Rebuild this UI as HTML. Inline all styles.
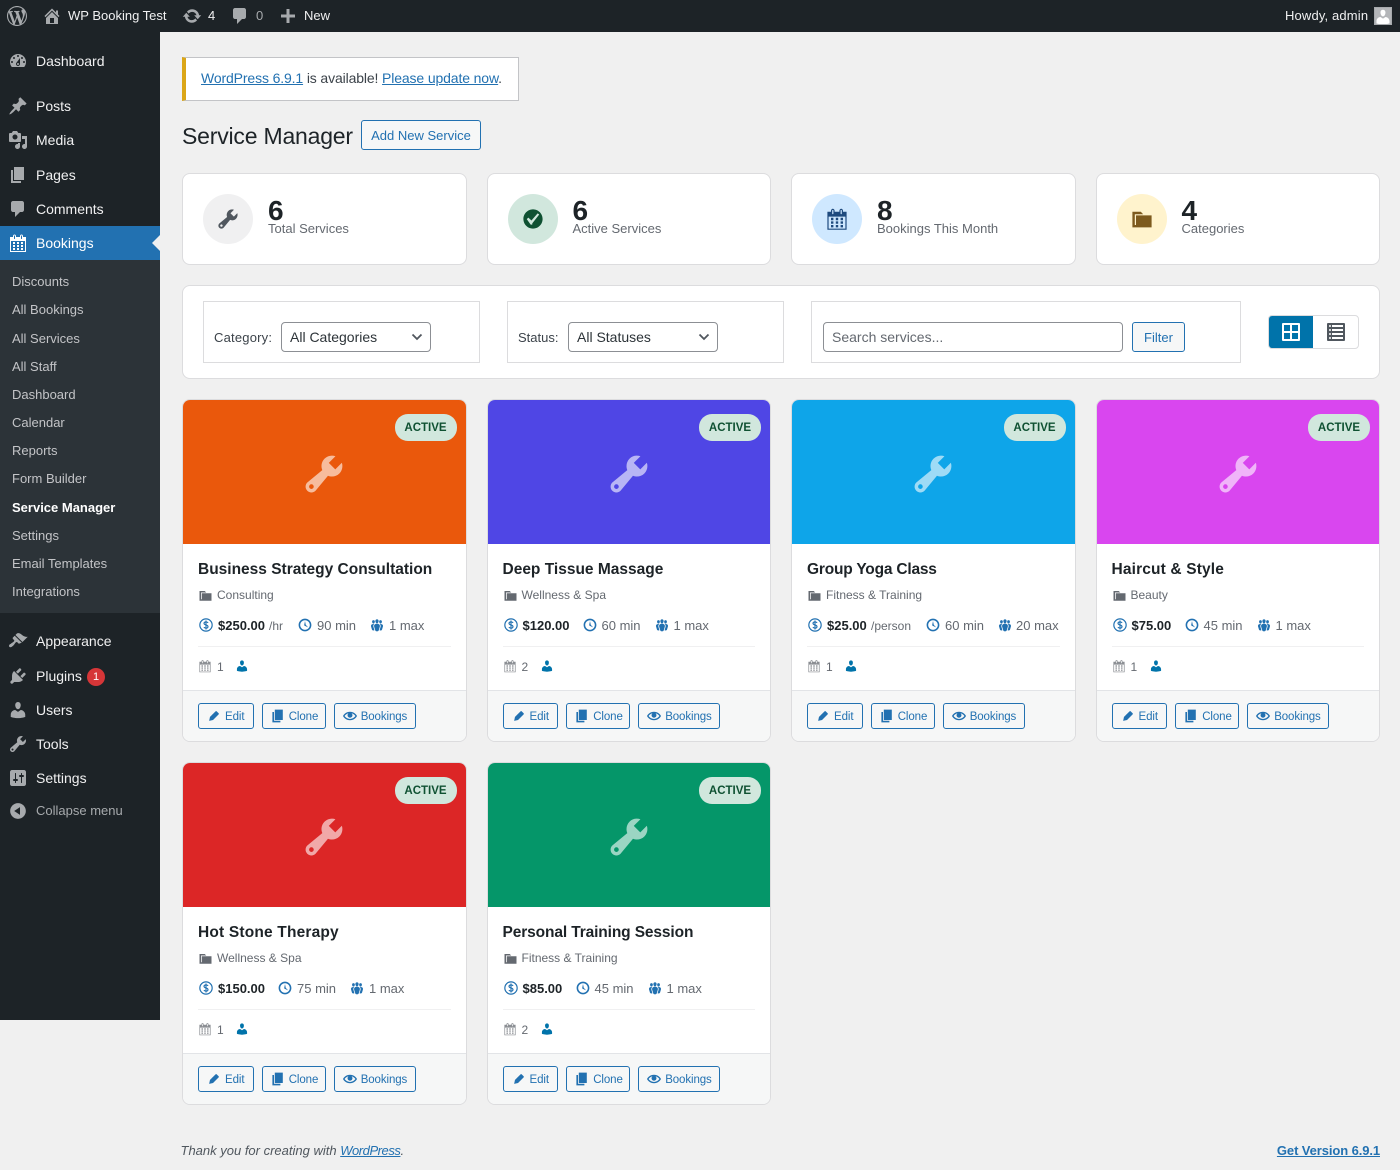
<!DOCTYPE html>
<html lang="en"><head><meta charset="utf-8"><title>Service Manager</title>
<style>
*{box-sizing:border-box}
html,body{margin:0;padding:0}
body{width:1400px;height:1170px;position:relative;overflow:hidden;background:#f0f0f0;font-family:"Liberation Sans",sans-serif;color:#1d2327;font-size:13px}
a{color:#2271b1}
.a{position:absolute}
.t{position:absolute;white-space:nowrap;line-height:20px;height:20px}
svg.i{position:absolute;fill:currentColor;display:block}
#bar{left:0;top:0;width:1400px;height:32px;background:#1d2327;color:#f0f0f1;font-size:13px}
#bar svg.i{color:#a7aaad}
#side{left:0;top:32px;width:160px;height:988px;background:#1d2327}
.m{left:36px;color:#f0f0f1;font-size:14px}
.s{left:12px;color:#c3c4c7;font-size:13px}
.ic{left:8px;width:20px;height:20px;color:#a7aaad}
.box{position:absolute;background:#fff;border:1px solid #dcdcde;border-radius:8px}
.st{width:284.5px;height:92px;top:173px}
.circ{position:absolute;left:20px;top:20px;width:50px;height:50px;border-radius:50%}
.circ svg{left:13px;top:13px;width:24px;height:24px}
.num{position:absolute;left:85px;top:21px;font-size:28px;font-weight:700;line-height:32px;color:#1d2327}
.lb{position:absolute;left:85px;top:44.5px;font-size:13px;line-height:20px;color:#646970;white-space:nowrap}
.fs{position:absolute;top:301px;height:62px;border:1px solid #dcdcde;background:#fff}
.sel{position:absolute;top:322px;height:30px;border:1px solid #8c8f94;border-radius:4px;background:#fff;font-size:14px;line-height:28px;padding-left:8px;color:#2c3338}
.sel svg{position:absolute;right:7px;top:9px;width:12px;height:10px;fill:none;stroke:#50575e;stroke-width:1.8}
.c{position:absolute;width:284.5px;height:343px;background:#fff;border:1px solid #dcdcde;border-radius:8px;overflow:hidden}
.im{position:absolute;left:0;top:0;right:0;height:144px}
.wr{position:absolute;left:50%;top:50.5px;margin-left:-23px;width:46px;height:46px;fill:#fff;fill-opacity:.6}
.bd{position:absolute;right:9px;top:14px;width:62px;height:27px;border-radius:13px;background:#d1e7dd;color:#0f5132;font-size:11.5px;font-weight:700;line-height:28.5px;text-align:center}
.ti{left:15px;top:160px;font-size:15.5px;font-weight:700;color:#1d2327}
.fo{left:15px;top:188px;width:15px;height:15px;color:#646970}
.ca{left:34px;top:185px;font-size:12px;color:#646970}
.p{top:216px;font-size:13px;font-weight:700;color:#1d2327}
.g{top:216px;font-size:13px;color:#646970}
.u{top:216px;font-size:12px;color:#646970}
.b{top:217px;width:16px;height:16px;color:#2271b1}
.dv{position:absolute;left:15px;right:15px;top:246px;height:1px;background:#f0f0f1}
.cal{left:15px;top:259px;width:14px;height:14px;color:#8c8f94}
.n{left:34px;top:257px;font-size:12px;color:#646970}
.per{left:52px;top:259px;width:14px;height:14px;color:#0073aa}
.ft{position:absolute;left:0;right:0;top:290px;height:52px;background:#f6f7f7;border-top:1px solid #e2e4e7}
.bt{position:absolute;top:303px;height:26px;background:#f6f7f7;border:1px solid #2271b1;border-radius:3px;color:#2271b1;font-size:11.5px;letter-spacing:-.1px;line-height:24px}
.bt svg{position:absolute;top:5px;width:14px;height:14px;fill:currentColor}
.bt span{position:absolute;top:1px;white-space:nowrap}
.e{left:15px;width:55.7px}.e svg{left:8px}.e span{left:26px}
.l{left:78.7px;width:64px}.l svg{left:7px;top:4px !important;width:16px !important;height:16px !important}.l span{left:26px}
.o{left:150.7px;width:82px}.o svg{left:8px}.o span{left:26px}
</style></head><body>
<svg width="0" height="0" style="position:absolute"><defs>
<symbol id="wp" viewBox="0 0 20 20"><path d="M20 10c0-5.51-4.49-10-10-10C4.48 0 0 4.49 0 10c0 5.52 4.48 10 10 10 5.51 0 10-4.48 10-10zM7.78 15.37L4.37 6.22c.55-.02 1.17-.08 1.17-.08.5-.06.44-1.13-.06-1.11 0 0-1.45.11-2.37.11-.18 0-.37 0-.58-.01C4.12 2.69 6.87 1.11 10 1.11c2.33 0 4.45.87 6.05 2.34-.68-.11-1.65.39-1.65 1.58 0 .74.45 1.36.9 2.1.35.61.55 1.36.55 2.46 0 1.49-1.4 5-1.4 5l-3.03-8.37c.54-.02.82-.17.82-.17.5-.05.44-1.25-.06-1.22 0 0-1.44.12-2.38.12-.87 0-2.33-.12-2.33-.12-.5-.03-.56 1.2-.06 1.22l.92.08 1.26 3.41zM17.41 10c.24-.64.74-1.87.43-4.25.7 1.29 1.05 2.71 1.05 4.25 0 3.29-1.73 6.24-4.4 7.78.97-2.59 1.94-5.2 2.92-7.78zM6.1 18.09C3.12 16.65 1.11 13.53 1.11 10c0-1.3.23-2.48.72-3.59C3.25 10.3 4.67 14.2 6.1 18.09zm4.03-6.63l2.58 6.98c-.86.29-1.76.45-2.71.45-.79 0-1.57-.11-2.29-.33.81-2.38 1.62-4.74 2.42-7.1z"/></symbol>
<symbol id="home" viewBox="0 0 20 20"><path d="M16 8.5l1.53 1.53-1.06 1.06L10 4.62l-6.47 6.47-1.06-1.06L10 2.5l4 4v-2h2v4zm-6-2.46l6 5.99V18H4v-5.97zM12 17v-5H8v5h4z"/></symbol>
<symbol id="upd" viewBox="0 0 20 20"><path d="M10.2 3.28c3.53 0 6.43 2.61 6.92 6h2.08l-3.5 4-3.5-4h2.32c-.45-1.97-2.21-3.45-4.32-3.45-1.45 0-2.73.71-3.54 1.78L4.95 5.66C6.23 4.2 8.11 3.28 10.2 3.28zm-.4 13.44c-3.52 0-6.43-2.61-6.92-6H.8l3.5-4c1.17 1.33 2.33 2.67 3.5 4H5.48c.45 1.97 2.21 3.45 4.32 3.45 1.45 0 2.73-.71 3.54-1.78l1.71 1.95c-1.28 1.46-3.15 2.38-5.25 2.38z"/></symbol>
<symbol id="com" viewBox="0 0 20 20"><path d="M5 2h9c1.1 0 2 .9 2 2v7c0 1.1-.9 2-2 2h-2l-5 5v-5H5c-1.1 0-2-.9-2-2V4c0-1.1.9-2 2-2z"/></symbol>
<symbol id="plus" viewBox="0 0 20 20"><path d="M17 8.5v3h-5.5V17h-3v-5.500H3v-3h5.500V3h3v5.500z"/></symbol>
<symbol id="dash" viewBox="0 0 20 20"><path d="M3.76 16h12.48c1.1-1.37 1.76-3.11 1.76-5 0-4.42-3.58-8-8-8s-8 3.58-8 8c0 1.89.66 3.63 1.76 5zM10 4c.55 0 1 .45 1 1s-.45 1-1 1-1-.45-1-1 .45-1 1-1zM6 6c.55 0 1 .45 1 1s-.45 1-1 1-1-.45-1-1 .45-1 1-1zm8 0c.55 0 1 .45 1 1s-.45 1-1 1-1-.45-1-1 .45-1 1-1zm-5.370 5.550L12 7v6c0 1.100-.9 2-2 2s-2-.9-2-2c0-.57.24-1.080.63-1.450zM4 10c.55 0 1 .45 1 1s-.45 1-1 1-1-.45-1-1 .45-1 1-1zm12 0c.55 0 1 .45 1 1s-.45 1-1 1-1-.45-1-1 .45-1 1-1zm-5 3c0-.55-.45-1-1-1s-1 .45-1 1 .45 1 1 1 1-.45 1-1z"/></symbol>
<symbol id="pin" viewBox="0 0 20 20"><path d="M10.44 3.020l1.820-1.820 6.360 6.350-1.830 1.820c-1.050-.68-2.480-.57-3.410.36l-.75.75c-.92.93-1.040 2.350-.35 3.410l-1.830 1.820-2.410-2.410-2.800 2.790c-.42.42-3.380 2.710-3.800 2.290s1.860-3.390 2.280-3.810l2.790-2.790L4.100 9.360l1.830-1.820c1.050.69 2.480.57 3.400-.36l.75-.75c.93-.92 1.050-2.350.36-3.410z"/></symbol>
<symbol id="med" viewBox="0 0 20 20"><path d="M13 11V4c0-.55-.45-1-1-1h-1.670L9 1H5L3.670 3H2c-.55 0-1 .45-1 1v7c0 .55.45 1 1 1h10c.55 0 1-.45 1-1zM7 4.500c1.380 0 2.500 1.120 2.500 2.500S8.380 9.500 7 9.500 4.500 8.380 4.500 7 5.620 4.500 7 4.500zM14 6h5v10.500c0 1.380-1.120 2.500-2.500 2.500S14 17.880 14 16.500s1.120-2.500 2.500-2.500c.17 0 .34.02.5.05V9h-3V6zm-4 8.050V13h2v3.500c0 1.380-1.120 2.500-2.500 2.500S7 17.880 7 16.500 8.120 14 9.500 14c.17 0 .34.02.5.05z"/></symbol>
<symbol id="pg" viewBox="0 0 20 20"><path d="M6 15V2h10v13H6zm-1 1h8v2H3V5h2v11z"/></symbol>
<symbol id="cald" viewBox="0 0 20 20"><path d="M15 4h3v15H2V4h3V3c0-.41.15-.76.44-1.060.29-.29.65-.44 1.060-.44s.77.15 1.060.44c.29.3.44.65.44 1.060v1h4V3c0-.41.15-.76.44-1.060.29-.29.65-.44 1.060-.44s.77.15 1.060.44c.29.3.44.65.44 1.060v1zM6 3v2.500c0 .14.05.26.15.36.09.09.21.14.35.14s.26-.05.35-.14c.1-.1.15-.22.15-.36V3c0-.14-.05-.26-.15-.35-.09-.1-.21-.15-.35-.15s-.26.05-.35.15c-.1.09-.15.21-.15.35zm7 0v2.500c0 .14.05.26.14.36.1.09.22.14.36.14s.26-.05.36-.14c.09-.1.14-.22.14-.36V3c0-.14-.05-.26-.14-.35-.1-.1-.22-.15-.36-.15s-.26.05-.36.15c-.09.09-.14.21-.14.35zm4 15V8H3v10h14zM7 9v2H5V9h2zm2 0h2v2H9V9zm4 2V9h2v2h-2zm-6 1v2H5v-2h2zm2 0h2v2H9v-2zm4 2v-2h2v2h-2zm-6 1v2H5v-2h2zm4 2H9v-2h2v2zm4 0h-2v-2h2v2z"/></symbol>
<symbol id="app" viewBox="0 0 20 20"><path d="M14.480 11.060L7.410 3.990l1.500-1.500c.5-.56 2.300-.47 3.510.32 1.210.8 1.430 1.280 2.910 2.100 1.180.64 2.450 1.260 4.450.85zm-.71.71L6.700 4.700 4.930 6.470c-.39.39-.39 1.020 0 1.410l1.060 1.060c.39.39.39 1.030 0 1.420-.6.6-1.430 1.110-2.210 1.690-.35.26-.7.53-1.010.84C1.430 13.230.4 14.840 1.400 15.840c.98.98 2.620-.07 3.970-1.360.3-.31.57-.66.84-1.010.57-.78 1.080-1.610 1.690-2.210.38-.39 1.020-.39 1.410 0l1.060 1.060c.39.39 1.020.39 1.410 0z"/></symbol>
<symbol id="plg" viewBox="0 0 20 20"><path d="M13.110 4.360L9.870 7.600 8 5.730l3.240-3.240c.35-.34 1.050-.2 1.560.32.52.51.66 1.210.31 1.550zm-8 1.770l.91-1.120 9.010 9.010-1.190.84c-.71.71-2.630 1.160-3.820 1.160H6.140L4.900 17.260c-.59.59-1.540.59-2.120 0-.59-.58-.59-1.530 0-2.120l1.240-1.240v-3.880c0-1.130.4-3.190 1.090-3.890zm7.260 3.970l3.240-3.240c.34-.35 1.040-.21 1.550.31.52.51.66 1.210.31 1.550l-3.240 3.250z"/></symbol>
<symbol id="usr" viewBox="0 0 20 20"><path d="M10 9.250c-2.270 0-2.730-3.440-2.730-3.440C7 4.020 7.820 2 9.970 2c2.160 0 2.980 2.020 2.710 3.810 0 0-.41 3.440-2.680 3.440zm0 2.570L12.720 10c2.390 0 4.520 2.330 4.520 4.530v2.490s-3.650 1.130-7.240 1.130c-3.650 0-7.240-1.130-7.240-1.130v-2.490c0-2.250 1.940-4.480 4.470-4.480z"/></symbol>
<symbol id="w" viewBox="0 0 20 20"><path fill-rule="evenodd" d="M16.680 9.770c-1.340 1.340-3.300 1.670-4.950.99l-5.410 6.520c-.99.99-2.590.99-3.580 0s-.99-2.590 0-3.570l6.520-5.420c-.68-1.650-.35-3.610.99-4.950 1.280-1.280 3.120-1.620 4.720-1.060l-2.890 2.890 2.820 2.820 2.860-2.870c.53 1.580.18 3.390-1.080 4.670zM3.810 16.210c.4.39 1.040.39 1.430 0 .4-.4.4-1.040 0-1.430-.39-.4-1.030-.4-1.430 0-.39.39-.39 1.030 0 1.430z"/></symbol>
<symbol id="set" viewBox="0 0 20 20"><path d="M18 16V4c0-1.100-.9-2-2-2H4c-1.100 0-2 .9-2 2v12c0 1.100.9 2 2 2h12c1.100 0 2-.9 2-2zM8 11h1c.55 0 1 .45 1 1s-.45 1-1 1H8v1.500c0 .28-.22.5-.5.5s-.5-.22-.5-.5V13H6c-.55 0-1-.45-1-1s.45-1 1-1h1V5.500c0-.28.22-.5.5-.5s.5.22.5.5V11zm5-2h-1c-.55 0-1-.45-1-1s.45-1 1-1h1V5.500c0-.28.22-.5.5-.5s.5.22.5.5V7h1c.55 0 1 .45 1 1s-.45 1-1 1h-1v5.500c0 .28-.22.5-.5.5s-.5-.22-.5-.5V9z"/></symbol>
<symbol id="col" viewBox="0 0 20 20"><path d="M10 2.160c4.330 0 7.840 3.510 7.840 7.840s-3.510 7.840-7.840 7.840S2.160 14.330 2.160 10 5.710 2.160 10 2.160zm2 11.720V6.120L6.180 9.970z"/></symbol>
<symbol id="yes" viewBox="0 0 20 20"><path d="M10 2c-4.420 0-8 3.580-8 8s3.580 8 8 8 8-3.580 8-8-3.580-8-8-8zm-.615 12.660h-1.340l-3.240-4.540 1.340-1.250 2.570 2.400 5.140-5.930 1.340.94-5.810 7.380z"/></symbol>
<symbol id="fol" viewBox="0 0 20 20"><path d="M5 7h13v10H2V4h7l2 2H4v9h1V7z"/></symbol>
<symbol id="clk" viewBox="0 0 20 20"><path d="M10 2c4.420 0 8 3.580 8 8s-3.580 8-8 8-8-3.580-8-8 3.580-8 8-8zm0 14c3.310 0 6-2.690 6-6s-2.690-6-6-6-6 2.690-6 6 2.690 6 6 6zm-.71-5.290c.07.05.14.1.23.15l-.02.02L14 13l-3.030-3.190L10 5l-.97 4.810h.01c0 .02-.01.05-.02.09S9 9.970 9 10c0 .28.1.52.29.71z"/></symbol>
<symbol id="grp" viewBox="0 0 20 20"><path d="M8.030 4.460c-.29 1.280.55 3.460 1.970 3.460 1.410 0 2.250-2.180 1.960-3.460-.22-.98-1.080-1.630-1.960-1.630-.89 0-1.740.65-1.970 1.630zm-4.130.9c-.25 1.080.47 2.930 1.670 2.930s1.920-1.850 1.670-2.930c-.19-.83-.92-1.390-1.670-1.390s-1.480.56-1.670 1.390zm8.860 0c-.25 1.080.47 2.930 1.660 2.930 1.200 0 1.920-1.850 1.670-2.930-.19-.83-.92-1.390-1.670-1.390-.74 0-1.470.56-1.660 1.390zm-.59 11.430l1.250-4.300C14.200 10 12.710 8.470 10 8.470c-2.720 0-4.210 1.530-3.440 4.020l1.260 4.300C8.050 17.510 9 18 10 18c.98 0 1.940-.49 2.170-1.210zm-6.100-7.630c-.49.67-.96 1.830-.42 3.590l1.120 3.790c-.34.2-.77.31-1.200.31-.85 0-1.650-.41-1.850-1.030l-1.070-3.650c-.65-2.110.61-3.400 2.920-3.400.27 0 .54.02.79.06-.1.1-.2.22-.29.33zm8.350-.39c2.310 0 3.580 1.290 2.920 3.400l-1.070 3.650c-.2.62-1 1.030-1.850 1.030-.43 0-.86-.11-1.200-.31l1.110-3.770c.55-1.780.08-2.940-.42-3.610-.08-.11-.18-.23-.28-.33.25-.04.51-.06.79-.06z"/></symbol>
<symbol id="mon" viewBox="0 0 20 20"><g fill="none" stroke="currentColor"><circle cx="10" cy="10" r="7.700" stroke-width="1.500"/><path stroke-width="1.400" d="M12.500 7.400c-.4-.9-1.400-1.300-2.500-1.300-1.400 0-2.500.7-2.500 1.900 0 2.600 5 1.300 5 4 0 1.200-1.100 1.900-2.500 1.900-1.100 0-2.100-.4-2.500-1.300M10 4.300v11.400"/></g></symbol>
<symbol id="edt" viewBox="0 0 20 20"><path d="M13.890 3.390l2.710 2.720c.46.46.42 1.240.03 1.640l-8.010 8.020-5.560 1.160 1.160-5.580s7.600-7.630 7.990-8.030c.39-.39 1.220-.39 1.680.07z"/></symbol>
<symbol id="eye" viewBox="0 0 20 20"><path d="M19.700 9.400C17.700 6 14 3.900 10 3.900S2.300 6 .3 9.400L0 10l.3.6c2 3.400 5.700 5.500 9.700 5.500s7.700-2.100 9.700-5.500l.3-.6-.3-.6zM10 14.100c-3.100 0-6-1.600-7.700-4.100C3.600 8 5.700 6.600 8 6.100c-.9.6-1.500 1.700-1.500 2.900 0 1.900 1.600 3.500 3.500 3.500s3.500-1.600 3.500-3.500c0-1.200-.6-2.300-1.500-2.900 2.300.5 4.400 1.900 5.700 3.900-1.700 2.500-4.600 4.100-7.700 4.100z"/></symbol>
<symbol id="grd" viewBox="0 0 20 20"><path fill-rule="evenodd" d="M2 1h16c.55 0 1 .45 1 1v16c0 .55-.45 1-1 1H2c-.55 0-1-.45-1-1V2c0-.55.45-1 1-1zm7.010 7.990v-6H3v6h6.010zm8 0v-6h-6v6h6zm-8 8.010v-6H3v6h6.010zm8 0v-6h-6v6h6z"/></symbol>
<symbol id="lst" viewBox="0 0 20 20"><path fill-rule="evenodd" d="M2 19h16c.55 0 1-.45 1-1V2c0-.55-.45-1-1-1H2c-.55 0-1 .45-1 1v16c0 .55.45 1 1 1zM4 3c.55 0 1 .45 1 1s-.45 1-1 1-1-.45-1-1 .45-1 1-1zm13 0v2H6V3h11zM4 7c.55 0 1 .45 1 1s-.45 1-1 1-1-.45-1-1 .45-1 1-1zm13 0v2H6V7h11zM4 11c.55 0 1 .45 1 1s-.45 1-1 1-1-.45-1-1 .45-1 1-1zm13 0v2H6v-2h11zM4 15c.55 0 1 .45 1 1s-.45 1-1 1-1-.45-1-1 .45-1 1-1zm13 0v2H6v-2h11z"/></symbol>
</defs></svg>

<div id="bar" class="a">
<svg class="i" style="left:7px;top:6px;width:20px;height:20px"><use href="#wp"/></svg>
<svg class="i" style="left:42px;top:6px;width:20px;height:20px"><use href="#home"/></svg>
<span class="t" style="left:68px;top:6px">WP Booking Test</span>
<svg class="i" style="left:182px;top:6px;width:20px;height:20px"><use href="#upd"/></svg>
<span class="t" style="left:208px;top:6px">4</span>
<svg class="i" style="left:230px;top:6px;width:20px;height:20px"><use href="#com"/></svg>
<span class="t" style="left:256px;top:6px;color:#a7aaad">0</span>
<svg class="i" style="left:278px;top:6px;width:20px;height:20px"><use href="#plus"/></svg>
<span class="t" style="left:304px;top:6px">New</span>
<span class="t" style="left:1285px;top:6px;letter-spacing:.15px">Howdy, admin</span>
<div class="a" style="left:1374px;top:7px;width:18px;height:18px;background:#b4b6b9;border:1px solid #a7aaad;overflow:hidden"><svg class="i" style="left:-1px;top:0;width:18px;height:18px;color:#fff"><use href="#usr"/></svg></div>
</div>

<div id="side" class="a"></div>
<div class="a" style="left:0;top:226px;width:160px;height:34px;background:#2271b1"></div>
<div class="a" style="left:144px;top:235px;width:0;height:0;border:8px solid transparent;border-right-color:#f0f0f0"></div>
<div class="a" style="left:0;top:260px;width:160px;height:353px;background:#2c3338"></div>

<svg class="i ic" style="top:51px"><use href="#dash"/></svg><span class="t m" style="top:51px">Dashboard</span>
<svg class="i ic" style="top:96px"><use href="#pin"/></svg><span class="t m" style="top:96px">Posts</span>
<svg class="i ic" style="top:130px"><use href="#med"/></svg><span class="t m" style="top:130px">Media</span>
<svg class="i ic" style="top:165px"><use href="#pg"/></svg><span class="t m" style="top:165px">Pages</span>
<svg class="i ic" style="top:199px"><use href="#com"/></svg><span class="t m" style="top:199px">Comments</span>
<svg class="i ic" style="top:233px;color:#fff"><use href="#cald"/></svg><span class="t m" style="top:233px;color:#fff">Bookings</span>
<span class="t s" style="top:272px">Discounts</span>
<span class="t s" style="top:300px">All Bookings</span>
<span class="t s" style="top:329px">All Services</span>
<span class="t s" style="top:357px">All Staff</span>
<span class="t s" style="top:385px">Dashboard</span>
<span class="t s" style="top:413px">Calendar</span>
<span class="t s" style="top:441px">Reports</span>
<span class="t s" style="top:469px">Form Builder</span>
<span class="t s" style="top:498px;color:#fff;font-weight:700">Service Manager</span>
<span class="t s" style="top:526px">Settings</span>
<span class="t s" style="top:554px">Email Templates</span>
<span class="t s" style="top:582px">Integrations</span>
<svg class="i ic" style="top:631px"><use href="#app"/></svg><span class="t m" style="top:631px">Appearance</span>
<svg class="i ic" style="top:666px"><use href="#plg"/></svg><span class="t m" style="top:666px">Plugins</span>
<div class="a" style="left:87px;top:668px;width:18px;height:18px;border-radius:50%;background:#d63638;color:#fff;font-size:11px;line-height:18px;text-align:center">1</div>
<svg class="i ic" style="top:700px"><use href="#usr"/></svg><span class="t m" style="top:700px">Users</span>
<svg class="i ic" style="top:734px"><use href="#w"/></svg><span class="t m" style="top:734px">Tools</span>
<svg class="i ic" style="top:768px"><use href="#set"/></svg><span class="t m" style="top:768px">Settings</span>
<svg class="i ic" style="top:801px"><use href="#col"/></svg><span class="t" style="left:36px;top:801px;color:#a7aaad;font-size:13px">Collapse menu</span>

<div class="a" style="left:182px;top:57px;width:337px;height:44px;background:#fff;border:1px solid #c3c4c7;border-left:4px solid #dba617"></div>
<span class="t" style="left:201px;top:68px;font-size:14px;letter-spacing:-.13px;color:#3c434a"><a href="#">WordPress 6.9.1</a> is available! <a href="#">Please update now</a>.</span>
<span class="t" style="left:182px;top:126px;font-size:23px;letter-spacing:-.2px;color:#1d2327">Service Manager</span>
<div class="a" style="left:361px;top:120px;width:120px;height:30px;background:#f6f7f7;border:1px solid #2271b1;border-radius:3px;color:#2271b1;font-size:13px;line-height:29px;text-align:center">Add New Service</div>

<div class="box st" style="left:182px"><div class="circ" style="background:#f0f0f1"><svg class="i" style="color:#50575e"><use href="#w"/></svg></div><div class="num">6</div><div class="lb">Total Services</div></div>
<div class="box st" style="left:486.500px"><div class="circ" style="background:#d1e7dd"><svg class="i" style="color:#0f5132"><use href="#yes"/></svg></div><div class="num">6</div><div class="lb">Active Services</div></div>
<div class="box st" style="left:791px"><div class="circ" style="background:#cfe8ff"><svg class="i" style="color:#1e4a7e"><use href="#cald"/></svg></div><div class="num">8</div><div class="lb">Bookings This Month</div></div>
<div class="box st" style="left:1095.500px"><div class="circ" style="background:#fff3cd"><svg class="i" style="color:#7d5a1e"><use href="#fol"/></svg></div><div class="num">4</div><div class="lb">Categories</div></div>

<div class="box" style="left:182px;top:285px;width:1198px;height:94px"></div>
<div class="fs" style="left:203px;width:277px"></div>
<div class="fs" style="left:507px;width:277px"></div>
<div class="fs" style="left:811px;width:430px"></div>
<span class="t" style="left:214px;top:328px;font-size:13px;letter-spacing:.2px;color:#3c434a">Category:</span>
<div class="sel" style="left:281px;width:150px">All Categories<svg viewBox="0 0 12 10"><path d="M1.500 2.500L6 7l4.500-4.500"/></svg></div>
<span class="t" style="left:518px;top:328px;font-size:13px;color:#3c434a">Status:</span>
<div class="sel" style="left:568px;width:150px">All Statuses<svg viewBox="0 0 12 10"><path d="M1.500 2.500L6 7l4.500-4.500"/></svg></div>
<div class="sel" style="left:823px;width:300px;color:#646970">Search services...</div>
<div class="a" style="left:1132px;top:322px;width:53px;height:30px;background:#f6f7f7;border:1px solid #2271b1;border-radius:3px;color:#2271b1;font-size:13px;line-height:29px;text-align:center">Filter</div>
<div class="a" style="left:1268px;top:315px;width:91px;height:34px;border:1px solid #dcdcde;border-radius:4px;background:#fff"></div>
<div class="a" style="left:1269px;top:316px;width:44px;height:32px;background:#0073aa;border-radius:3px 0 0 3px"></div>
<svg class="i" style="left:1281px;top:322px;width:20px;height:20px;color:#fff"><use href="#grd"/></svg>
<svg class="i" style="left:1326px;top:322px;width:20px;height:20px;color:#50575e"><use href="#lst"/></svg>

<!-- card 1 -->
<div class="c" style="left:182px;top:399px">
<div class="im" style="background:#ea580c"><svg class="wr"><use href="#w"/></svg><span class="bd">ACTIVE</span></div>
<span class="t ti">Business Strategy Consultation</span>
<svg class="i fo"><use href="#fol"/></svg><span class="t ca">Consulting</span>
<svg class="i b" style="left:15px"><use href="#mon"/></svg><span class="t p" style="left:35px">$250.00</span><span class="t u" style="left:86px">/hr</span>
<svg class="i b" style="left:114px"><use href="#clk"/></svg><span class="t g" style="left:134px">90 min</span>
<svg class="i b" style="left:186px"><use href="#grp"/></svg><span class="t g" style="left:206px">1 max</span>
<div class="dv"></div>
<svg class="i cal"><use href="#cald"/></svg><span class="t n">1</span><svg class="i per"><use href="#usr"/></svg>
<div class="ft"></div>
<div class="bt e"><svg><use href="#edt"/></svg><span>Edit</span></div>
<div class="bt l"><svg><use href="#pg"/></svg><span>Clone</span></div>
<div class="bt o"><svg><use href="#eye"/></svg><span>Bookings</span></div>
</div>
<!-- card 2 -->
<div class="c" style="left:486.500px;top:399px">
<div class="im" style="background:#4f46e5"><svg class="wr"><use href="#w"/></svg><span class="bd">ACTIVE</span></div>
<span class="t ti">Deep Tissue Massage</span>
<svg class="i fo"><use href="#fol"/></svg><span class="t ca">Wellness &amp; Spa</span>
<svg class="i b" style="left:15px"><use href="#mon"/></svg><span class="t p" style="left:35px">$120.00</span>
<svg class="i b" style="left:94px"><use href="#clk"/></svg><span class="t g" style="left:114px">60 min</span>
<svg class="i b" style="left:166px"><use href="#grp"/></svg><span class="t g" style="left:186px">1 max</span>
<div class="dv"></div>
<svg class="i cal"><use href="#cald"/></svg><span class="t n">2</span><svg class="i per"><use href="#usr"/></svg>
<div class="ft"></div>
<div class="bt e"><svg><use href="#edt"/></svg><span>Edit</span></div>
<div class="bt l"><svg><use href="#pg"/></svg><span>Clone</span></div>
<div class="bt o"><svg><use href="#eye"/></svg><span>Bookings</span></div>
</div>
<!-- card 3 -->
<div class="c" style="left:791px;top:399px">
<div class="im" style="background:#0ea5e9"><svg class="wr"><use href="#w"/></svg><span class="bd">ACTIVE</span></div>
<span class="t ti" style="letter-spacing:-.2px">Group Yoga Class</span>
<svg class="i fo"><use href="#fol"/></svg><span class="t ca">Fitness &amp; Training</span>
<svg class="i b" style="left:15px"><use href="#mon"/></svg><span class="t p" style="left:35px">$25.00</span><span class="t u" style="left:79px">/person</span>
<svg class="i b" style="left:133px"><use href="#clk"/></svg><span class="t g" style="left:153px">60 min</span>
<svg class="i b" style="left:205px"><use href="#grp"/></svg><span class="t g" style="left:224px">20 max</span>
<div class="dv"></div>
<svg class="i cal"><use href="#cald"/></svg><span class="t n">1</span><svg class="i per"><use href="#usr"/></svg>
<div class="ft"></div>
<div class="bt e"><svg><use href="#edt"/></svg><span>Edit</span></div>
<div class="bt l"><svg><use href="#pg"/></svg><span>Clone</span></div>
<div class="bt o"><svg><use href="#eye"/></svg><span>Bookings</span></div>
</div>
<!-- card 4 -->
<div class="c" style="left:1095.500px;top:399px">
<div class="im" style="background:#d946ef"><svg class="wr"><use href="#w"/></svg><span class="bd">ACTIVE</span></div>
<span class="t ti" style="letter-spacing:.15px">Haircut &amp; Style</span>
<svg class="i fo"><use href="#fol"/></svg><span class="t ca">Beauty</span>
<svg class="i b" style="left:15px"><use href="#mon"/></svg><span class="t p" style="left:35px">$75.00</span>
<svg class="i b" style="left:87px"><use href="#clk"/></svg><span class="t g" style="left:107px">45 min</span>
<svg class="i b" style="left:159px"><use href="#grp"/></svg><span class="t g" style="left:179px">1 max</span>
<div class="dv"></div>
<svg class="i cal"><use href="#cald"/></svg><span class="t n">1</span><svg class="i per"><use href="#usr"/></svg>
<div class="ft"></div>
<div class="bt e"><svg><use href="#edt"/></svg><span>Edit</span></div>
<div class="bt l"><svg><use href="#pg"/></svg><span>Clone</span></div>
<div class="bt o"><svg><use href="#eye"/></svg><span>Bookings</span></div>
</div>
<!-- card 5 -->
<div class="c" style="left:182px;top:762px">
<div class="im" style="background:#dc2626"><svg class="wr"><use href="#w"/></svg><span class="bd">ACTIVE</span></div>
<span class="t ti" style="letter-spacing:.18px">Hot Stone Therapy</span>
<svg class="i fo"><use href="#fol"/></svg><span class="t ca">Wellness &amp; Spa</span>
<svg class="i b" style="left:15px"><use href="#mon"/></svg><span class="t p" style="left:35px">$150.00</span>
<svg class="i b" style="left:94px"><use href="#clk"/></svg><span class="t g" style="left:114px">75 min</span>
<svg class="i b" style="left:166px"><use href="#grp"/></svg><span class="t g" style="left:186px">1 max</span>
<div class="dv"></div>
<svg class="i cal"><use href="#cald"/></svg><span class="t n">1</span><svg class="i per"><use href="#usr"/></svg>
<div class="ft"></div>
<div class="bt e"><svg><use href="#edt"/></svg><span>Edit</span></div>
<div class="bt l"><svg><use href="#pg"/></svg><span>Clone</span></div>
<div class="bt o"><svg><use href="#eye"/></svg><span>Bookings</span></div>
</div>
<!-- card 6 -->
<div class="c" style="left:486.500px;top:762px">
<div class="im" style="background:#059669"><svg class="wr"><use href="#w"/></svg><span class="bd">ACTIVE</span></div>
<span class="t ti" style="letter-spacing:-.12px">Personal Training Session</span>
<svg class="i fo"><use href="#fol"/></svg><span class="t ca">Fitness &amp; Training</span>
<svg class="i b" style="left:15px"><use href="#mon"/></svg><span class="t p" style="left:35px">$85.00</span>
<svg class="i b" style="left:87px"><use href="#clk"/></svg><span class="t g" style="left:107px">45 min</span>
<svg class="i b" style="left:159px"><use href="#grp"/></svg><span class="t g" style="left:179px">1 max</span>
<div class="dv"></div>
<svg class="i cal"><use href="#cald"/></svg><span class="t n">2</span><svg class="i per"><use href="#usr"/></svg>
<div class="ft"></div>
<div class="bt e"><svg><use href="#edt"/></svg><span>Edit</span></div>
<div class="bt l"><svg><use href="#pg"/></svg><span>Clone</span></div>
<div class="bt o"><svg><use href="#eye"/></svg><span>Bookings</span></div>
</div>

<span class="t" style="left:180.5px;top:1141px;font-size:13px;font-style:italic;color:#50575e">Thank you for creating with <a href="#" style="letter-spacing:-.45px">WordPress</a>.</span>
<span class="t" style="right:20px;top:1141px;font-size:13px;font-weight:700;letter-spacing:-.1px"><a href="#">Get Version 6.9.1</a></span>
</body></html>
